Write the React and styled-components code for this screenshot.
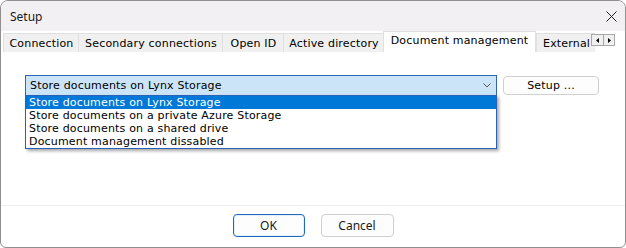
import React from "react";
import styled, { createGlobalStyle } from "styled-components";

const Global = createGlobalStyle`
  html, body { margin: 0; padding: 0; background: #ffffff; }
  body { width: 626px; height: 248px; overflow: hidden; }
  * { box-sizing: border-box; }
`;

const classic = `"DejaVu Sans", Verdana, sans-serif`;
const modern = `"Segoe UI", "Noto Sans", "Open Sans", sans-serif`;

const Window = styled.div`
  width: 626px;
  height: 248px;
  border: 1px solid #8f8f8f;
  border-radius: 8px 8px 6px 6px;
  overflow: hidden;
  display: flex;
  flex-direction: column;
  background: #ffffff;
`;

const TitleBar = styled.div`
  height: 30px;
  flex: none;
  display: flex;
  align-items: center;
  justify-content: space-between;
  padding: 0 0 0 9px;
  background: #f3f0f3;
  font-family: ${modern};
  font-size: 12px;
  color: #1a1a1a;
`;

const CloseButton = styled.div`
  width: 46px;
  height: 30px;
  display: flex;
  align-items: center;
  justify-content: center;
  margin-right: -9px;
`;

const TabStrip = styled.div`
  position: relative;
  height: 21px;
  flex: none;
  display: flex;
  align-items: flex-end;
  padding-left: 2px;
  overflow: hidden;
  background: #ffffff;
  font-family: ${classic};
  font-size: 11px;
  letter-spacing: 0.18px;
  color: #000;
`;

const Tab = styled.div`
  flex: none;
  width: ${(p) => (p.$w ? `${p.$w}px` : "auto")};
  height: ${(p) => (p.$active ? "21px" : "19px")};
  padding: ${(p) => (p.$active ? "0 0 3px 0" : "0 5px 0 6px")};
  display: flex;
  align-items: center;
  justify-content: center;
  white-space: nowrap;
  background: ${(p) => (p.$active ? "#ffffff" : "#f0f0f0")};
  border: 1px solid #e0e0e0;
  border-bottom: none;
  border-right: ${(p) => (p.$active ? "1px solid #e0e0e0" : "none")};
`;

const Scroller = styled.div`
  position: absolute;
  right: 10px;
  top: 3px;
  display: flex;
  height: 12px;
  border: 1px solid #a8a8a8;
  background: #f0f0f0;
`;

const ScrollBtn = styled.div`
  width: 11px;
  height: 100%;
  display: flex;
  align-items: center;
  justify-content: center;
  & + & { border-left: 1px solid #a8a8a8; }
`;

const Content = styled.div`
  flex: 1;
  padding: 23px 0 0 24px;
  font-family: ${classic};
  font-size: 11px;
  letter-spacing: 0.18px;
  color: #000;
`;

const Row = styled.div`
  display: flex;
  align-items: center;
  gap: 6px;
`;

const ComboWrap = styled.div`
  position: relative;
  width: 472px;
  height: 21px;
`;

const Combo = styled.div`
  height: 100%;
  display: flex;
  align-items: center;
  justify-content: space-between;
  padding: 0 5px 0 4px;
  background: #cce4f7;
  border: 1px solid #2f67b8;
`;

const List = styled.div`
  position: absolute;
  left: 0;
  top: 20px;
  width: 472px;
  border: 1px solid #2a62b6;
  background: #ffffff;
  box-shadow: 2px 2px 3px rgba(0, 0, 0, 0.35);
  z-index: 2;
`;

const Option = styled.div`
  height: 13px;
  line-height: 13px;
  padding-left: 3px;
  white-space: nowrap;
  background: ${(p) => (p.$selected ? "#0078d7" : "transparent")};
  color: ${(p) => (p.$selected ? "#ffffff" : "#000000")};
`;

const SetupButton = styled.div`
  width: 96px;
  height: 19px;
  display: flex;
  align-items: center;
  justify-content: center;
  border: 1px solid #d0d0d0;
  border-radius: 4px;
  background: #fdfdfd;
`;

const Footer = styled.div`
  height: 42px;
  flex: none;
  display: flex;
  justify-content: center;
  align-items: flex-start;
  gap: 16px;
  padding-top: 8px;
  border-top: 1px solid #efefef;
  font-family: ${modern};
  font-size: 12px;
`;

const DialogButton = styled.div`
  width: ${(p) => p.$w}px;
  height: 23px;
  display: flex;
  align-items: center;
  justify-content: center;
  border-radius: 4px;
  background: #fdfdfd;
  color: #1a1a1a;
  border: 1px solid ${(p) => (p.$primary ? "#1b6ac0" : "#d0d0d0")};
  box-shadow: ${(p) => (p.$primary ? "inset 0 0 0 1px #e6f0fa" : "none")};
`;

const options = [
  "Store documents on Lynx Storage",
  "Store documents on a private Azure Storage",
  "Store documents on a shared drive",
  "Document management dissabled",
];

const tabs = [
  { label: "Connection", w: 75 },
  { label: "Secondary connections", w: 144 },
  { label: "Open ID", w: 61 },
  { label: "Active directory", w: 100 },
  { label: "Document management", w: 153, active: true },
  { label: "External" },
];

export default function App() {
  return (
    <>
      <Global />
      <Window>
        <TitleBar>
          <span>Setup</span>
          <CloseButton>
            <svg width="11" height="11" viewBox="0 0 11 11">
              <path d="M0.5 0.5 L10.5 10.5 M10.5 0.5 L0.5 10.5" stroke="#222" strokeWidth="1" fill="none" />
            </svg>
          </CloseButton>
        </TitleBar>
        <TabStrip>
          {tabs.map((t) => (
            <Tab key={t.label} $w={t.w} $active={t.active}>
              {t.label}
            </Tab>
          ))}
          <Scroller>
            <ScrollBtn>
              <svg width="3" height="5" viewBox="0 0 3 5">
                <path d="M3 0 L0 2.5 L3 5 Z" fill="#000" />
              </svg>
            </ScrollBtn>
            <ScrollBtn>
              <svg width="3" height="5" viewBox="0 0 3 5">
                <path d="M0 0 L3 2.5 L0 5 Z" fill="#000" />
              </svg>
            </ScrollBtn>
          </Scroller>
        </TabStrip>
        <Content>
          <Row>
            <ComboWrap>
              <Combo>
                <span>{options[0]}</span>
                <svg width="8" height="5" viewBox="0 0 8 5">
                  <path d="M0.5 0.5 L4 4 L7.5 0.5" stroke="#5a5a5a" strokeWidth="1" fill="none" />
                </svg>
              </Combo>
              <List>
                {options.map((o, i) => (
                  <Option key={o} $selected={i === 0}>
                    {o}
                  </Option>
                ))}
              </List>
            </ComboWrap>
            <SetupButton>Setup ...</SetupButton>
          </Row>
        </Content>
        <Footer>
          <DialogButton $primary $w={72}>OK</DialogButton>
          <DialogButton $w={73}>Cancel</DialogButton>
        </Footer>
      </Window>
    </>
  );
}
